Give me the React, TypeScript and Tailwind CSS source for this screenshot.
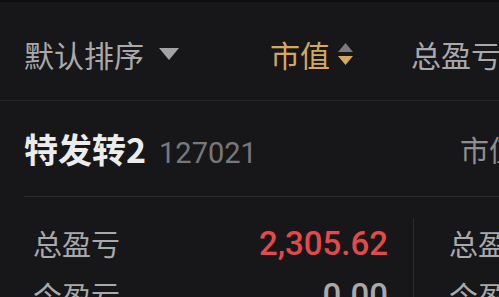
export default function App() {
  return (
    <div className="w-[499px] h-[297px] overflow-hidden bg-[#17171a] border-t-2 border-[#0e0e10] font-['Noto_Sans_CJK_SC','Noto_Sans',sans-serif]">
      {/* Sort header */}
      <div className="h-[99px] pt-[6px] flex items-center pl-[24px] border-b border-[#232326] whitespace-nowrap">
        <div className="w-[246px] shrink-0 flex items-center gap-[15px] text-[30px] text-[#a9a9ab]">
          <span>默认排序</span>
          <svg width="20" height="12" viewBox="0 0 20 12">
            <path d="M0 0 H20 L10 12 Z" fill="#a3a3a5" />
          </svg>
        </div>
        <div className="w-[141px] shrink-0 flex items-center gap-[8px] text-[30px] text-[#d6a85e]">
          <span>市值</span>
          <svg width="15" height="22" viewBox="0 0 15 22">
            <path d="M7.5 0 L15 9 H0 Z" fill="#7a7a7c" />
            <path d="M0 13 H15 L7.5 22 Z" fill="#d6a85e" />
          </svg>
        </div>
        <div className="shrink-0 text-[30px] text-[#a9a9ab]">总盈亏</div>
      </div>

      {/* Position card */}
      <div className="ml-[24px]">
        <div className="h-[96px] pt-[2px] flex items-center border-b border-[#2c2c2f] whitespace-nowrap">
          <div className="w-[436px] shrink-0 flex items-baseline gap-[13px]">
            <span className="text-[34px] font-bold text-[#ececec]">特发转2</span>
            <span className="text-[29px] text-[#78787a] font-['Roboto',sans-serif]">127021</span>
          </div>
          <span className="shrink-0 text-[29px] text-[#8e8e90]">市值</span>
        </div>

        <div className="flex pt-[21px]">
          <div className="w-[390px] shrink-0 pl-[9px] pr-[25px] border-r border-[#2a2a2d] flex flex-col">
            <div className="h-[52px] flex items-center justify-between">
              <span className="text-[29px] text-[#a9a9ab]">总盈亏</span>
              <span className="text-[33px] font-medium text-[#e34a4a] font-['Roboto',sans-serif]">2,305.62</span>
            </div>
            <div className="h-[52px] flex items-center justify-between">
              <span className="text-[29px] text-[#a9a9ab]">今盈亏</span>
              <span className="text-[33px] font-medium text-[#a9a9ab] font-['Roboto',sans-serif]">0.00</span>
            </div>
          </div>
          <div className="shrink-0 pl-[35px] flex flex-col whitespace-nowrap">
            <div className="h-[52px] flex items-center text-[29px] text-[#a9a9ab]">总盈亏</div>
            <div className="h-[52px] flex items-center text-[29px] text-[#a9a9ab]">今盈亏</div>
          </div>
        </div>
      </div>
    </div>
  );
}
